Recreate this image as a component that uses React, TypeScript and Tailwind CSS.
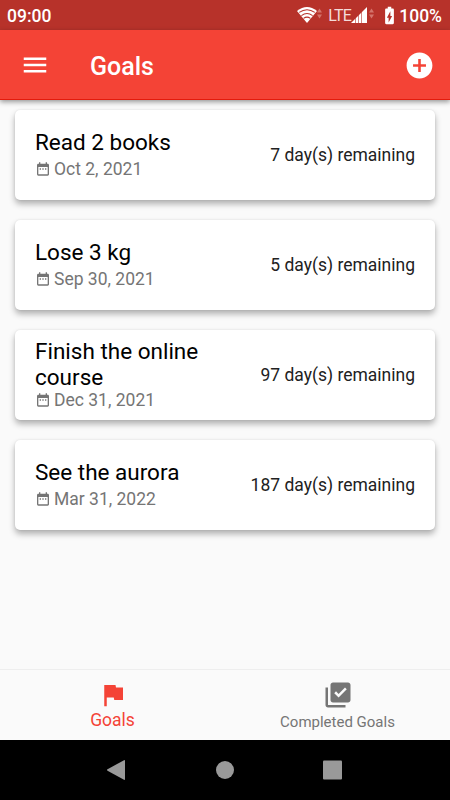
import { MdAddCircle, MdBatteryChargingFull, MdDateRange, MdFlag, MdLibraryAddCheck, MdMenu } from 'react-icons/md';

const goals = [
  { title: 'Read 2 books', date: 'Oct 2, 2021', days: 7 },
  { title: 'Lose 3 kg', date: 'Sep 30, 2021', days: 5 },
  { title: 'Finish the online course', date: 'Dec 31, 2021', days: 97 },
  { title: 'See the aurora', date: 'Mar 31, 2022', days: 187 }
];

const DataArrows = () => (
  <svg className="w-[5px] h-[11px] -mt-1 text-[#d4746c]" viewBox="0 0 5 11" fill="currentColor">
    <path d="M2.5 0.5L5 4.5H0zM2.5 10.5L0 6.5H5z" />
  </svg>
);

const StatusBar = () => (
  <div className="h-[30px] bg-[#b7322a] text-white flex items-center justify-between pl-[7px] pr-[8px]">
    <span className="text-[17.5px] font-medium leading-none pt-[3px]">09:00</span>
    <div className="flex items-center">
      <svg className="w-[20px] h-[16px]" viewBox="0 0 20 16">
        <path d="M0 4Q10 -4 20 4L10 16z" fill="#fff" />
        <path d="M2.2 5.4Q10 0 17.8 5.4M4.4 8.6Q10 4.4 15.6 8.6M6.6 11.4Q10 8.8 13.4 11.4" fill="none" stroke="#b7322a" strokeWidth="1.1" />
      </svg>
      <DataArrows />
      <span className="text-[16px] leading-none ml-[6px] pt-[2px] w-[23px] tracking-[-0.8px] text-[#f4dcda]">LTE</span>
      <svg className="w-[16px] h-[16px]" viewBox="0 0 16 16">
        <path d="M0 16L16 0V16z" fill="#fff" />
        <path d="M4.5 11V16M7.5 8V16M10.5 5V16" stroke="#b7322a" strokeWidth="0.6" />
      </svg>
      <div className="ml-[2px]">
        <DataArrows />
      </div>
      <MdBatteryChargingFull className="w-[21px] h-[21px] ml-[5px] -mr-px" />
      <span className="text-[17.5px] font-medium leading-none pt-[3px]">100%</span>
    </div>
  </div>
);

const GoalCard = ({ title, date, days }: { title: string; date: string; days: number }) => (
  <div className="h-[90px] bg-white rounded-[5px] px-5 flex items-center justify-between shadow-[0_4px_6px_rgba(0,0,0,0.3),0_0_2px_rgba(0,0,0,0.1)]">
    <div className="w-[190px] pb-[3px]">
      <h2 className="text-[22.5px] leading-[26px] min-h-[30px] text-black">{title}</h2>
      <div className="flex items-center text-[#757575]">
        <MdDateRange className="w-4 h-4 mr-[3px]" />
        <span className="text-[17.5px] leading-[20px]">{date}</span>
      </div>
    </div>
    <span className="text-[17.5px] leading-[20px] text-[#212121] whitespace-nowrap">{days} day(s) remaining</span>
  </div>
);

const App = () => {
  return (
    <div className="w-[450px] h-[800px] flex flex-col bg-[#fafafa] font-[Roboto,sans-serif] overflow-hidden">
      <StatusBar />
      <header className="relative h-[70px] shrink-0 bg-[#f44336] text-white border-b border-[#e31b0c] flex items-center px-5 shadow-[0_2px_5px_rgba(0,0,0,0.4)]">
        <MdMenu className="w-[30px] h-[30px]" />
        <h1 className="text-[25px] font-medium ml-10 flex-1 pt-[4px]">Goals</h1>
        <MdAddCircle className="w-[31px] h-[31px] -mr-[5px] mt-px" />
      </header>

      <main className="flex-1 flex flex-col gap-5 px-[15px] pt-[10px]">
        {goals.map((goal) => (
          <GoalCard key={goal.title} {...goal} />
        ))}
      </main>

      <nav className="h-[71px] border-t border-[#eeeeee] grid grid-cols-2">
        <div className="flex flex-col items-center pt-[10px] text-[#f44336]">
          <MdFlag className="w-[30px] h-[30px]" />
          <span className="text-[17.5px] leading-[20px]">Goals</span>
        </div>
        <div className="flex flex-col items-center pt-[10px] text-[#757575]">
          <MdLibraryAddCheck className="w-[30px] h-[30px]" />
          <span className="text-[15px] leading-[24px]">Completed Goals</span>
        </div>
      </nav>

      <div className="h-[60px] bg-black">
        <svg className="w-full h-full" viewBox="0 0 450 60" fill="#999999">
          <path d="M107.5 29.3L124 20.2Q125 19.8 125 21V39Q125 40.2 124 39.8L107.5 30.7Q106.5 30 107.5 29.3z" />
          <circle cx="225" cy="30" r="9" />
          <rect x="323" y="20.5" width="19" height="19" rx="1" />
        </svg>
      </div>
    </div>
  );
};

export default App;
